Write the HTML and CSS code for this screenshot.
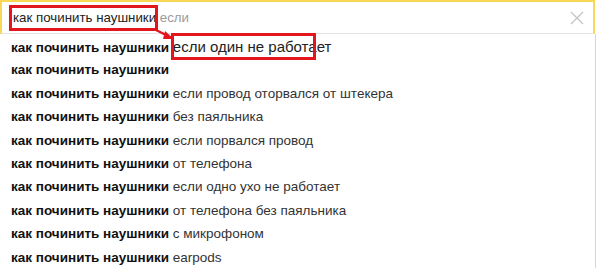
FILE: index.html
```html
<!DOCTYPE html>
<html lang="ru">
<head>
    <meta charset="UTF-8">
    <title>Подсказки поиска</title>
    <link rel="stylesheet" href="styles.css">
</head>
<body>
    <div class="frame">
        <div class="search">
            <div class="text"><span class="query">как починить наушники</span> <span class="hint">если</span></div>
            <span class="clear">
                <svg width="14" height="14" viewBox="0 0 14 14"><path d="M1 1L13 13M13 1L1 13" stroke="#c4c4c4" stroke-width="1.3" fill="none"/></svg>
            </span>
        </div>
        <ul class="suggest">
            <li class="active"><b>как починить наушники</b> <span>если один не работает</span></li>
            <li><b>как починить наушники</b></li>
            <li><b>как починить наушники</b> если провод оторвался от штекера</li>
            <li><b>как починить наушники</b> без паяльника</li>
            <li><b>как починить наушники</b> если порвался провод</li>
            <li><b>как починить наушники</b> от телефона</li>
            <li><b>как починить наушники</b> если одно ухо не работает</li>
            <li><b>как починить наушники</b> от телефона без паяльника</li>
            <li><b>как починить наушники</b> с микрофоном</li>
            <li><b>как починить наушники</b> earpods</li>
        </ul>

        <!-- annotation -->
        <div class="mark mark-query"></div>
        <div class="mark mark-hint"></div>
        <svg class="arrow" width="24" height="16" viewBox="0 0 24 16">
            <path d="M1 2L15 9" stroke="#e3161d" stroke-width="2.4" fill="none"/>
            <path d="M12 4L21 12L10 12Z" fill="#e3161d"/>
        </svg>
    </div>
</body>
</html>
```
FILE: styles.css
```css
*, *::before, *::after {
    box-sizing: border-box;
}
body {
    margin: 0;
    background: #ffffff;
    font-family: 'Liberation Sans', Arial, sans-serif;
    color: #222;
}
.frame {
    position: relative;
    width: 599px;
    height: 268px;
    overflow: hidden;
}
.search {
    display: flex;
    align-items: center;
    width: 595px;
    height: 34px;
    padding: 0 0 0 11px;
    border: 2px solid #f8d854;
    border-bottom: 1px solid #e4e4e4;
    font-size: 13.3px;
}
.search .query {
    color: #222;
}
.search .hint {
    color: #9a9a9a;
}
.search .clear {
    margin-left: auto;
    margin-right: 9px;
    display: flex;
}
.suggest {
    list-style: none;
    margin: 0;
    padding: 1px 0 0;
    width: 596px;
    border-right: 1px solid #d6d6d6;
    height: 234px;
}
.suggest li {
    height: 23.4px;
    line-height: 23.4px;
    padding-left: 11px;
    font-size: 13.5px;
    color: #333;
    white-space: nowrap;
}
.suggest li b {
    color: #111;
}
.suggest li.active span {
    font-size: 15px;
    color: #222;
}
.mark {
    position: absolute;
    border: 3px solid #e3161d;
}
.mark-query {
    left: 9px;
    top: 5px;
    width: 149px;
    height: 26px;
}
.mark-hint {
    left: 171px;
    top: 33px;
    width: 145px;
    height: 27px;
}
.arrow {
    position: absolute;
    left: 153px;
    top: 27px;
}
```
